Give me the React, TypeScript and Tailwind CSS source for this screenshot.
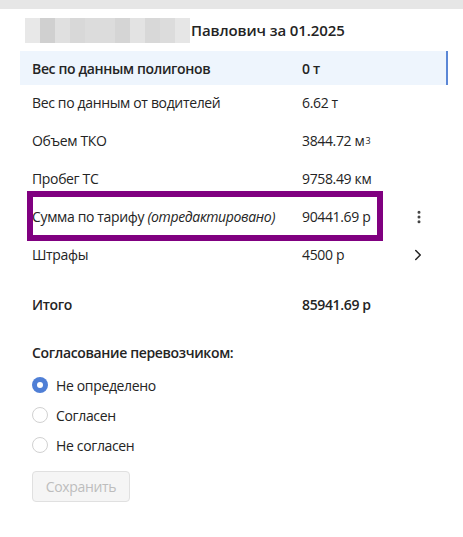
import React from 'react';
import { MoreVertical, ChevronRight } from 'lucide-react';

const blurBlocks = ['#e8e8e8', '#d0d0d0', '#e0e0e0', '#d8d8d8', '#dcdcdc', '#dcdcdc', '#d5d5d5', '#e3e3e3', '#d8d8d8', '#dcdcdc', '#e6e6e6'];

type Row = {
    label: React.ReactNode;
    value: React.ReactNode;
    action?: 'menu' | 'open';
    marked?: boolean;
};

const rows: Row[] = [
    { label: 'Вес по данным от водителей', value: '6.62 т' },
    { label: 'Объем ТКО', value: <>3844.72 м<sup className="text-[9px] relative -top-0.5 ml-px">3</sup></> },
    { label: 'Пробег ТС', value: '9758.49 км' },
    {
        label: <>Сумма по тарифу <i>(отредактировано)</i></>,
        value: '90441.69 р',
        action: 'menu',
        marked: true,
    },
    { label: 'Штрафы', value: '4500 р', action: 'open' },
];

const options = ['Не определено', 'Согласен', 'Не согласен'];

export default function App() {
    return (
        <div className="min-h-screen bg-white text-[14px] tracking-[-0.35px] text-[#242424]" style={{ fontFamily: '"Open Sans", "Noto Sans", sans-serif' }}>
            <div className="h-[9px] bg-[#e6e6e6]" />

            <div className="px-5">
                {/* Header */}
                <div className="flex items-center h-[42px] pl-[5px]">
                    <div className="flex h-[25px]">
                        {blurBlocks.map((c, i) => (
                            <div key={i} className="w-[15px] h-full" style={{ backgroundColor: c }} />
                        ))}
                    </div>
                    <h2 className="text-[15px] font-semibold ml-px tracking-[-0.1px]">Павлович за 01.2025</h2>
                </div>

                {/* Summary table */}
                <div className="w-[428px]">
                    <div className="flex items-center h-[34px] bg-[#eef5fd] border-r-2 border-[#5b87d6] font-semibold">
                        <div className="w-[282px] pl-3">Вес по данным полигонов</div>
                        <div>0 т</div>
                    </div>

                    {rows.map((r, i) => (
                        <div key={i} className="relative flex items-center h-[38px] pb-[3px]">
                            <div className="w-[282px] pl-3">{r.label}</div>
                            <div className="w-[100px]">{r.value}</div>
                            <div className="flex-1 flex justify-end pr-[21px] text-[#424242]">
                                {r.action === 'menu' && <MoreVertical className="w-[16px] h-[16px]" strokeWidth={2.5} />}
                                {r.action === 'open' && <ChevronRight className="w-[18px] h-[18px] text-[#242424]" strokeWidth={2} />}
                            </div>
                            {r.marked && (
                                <div className="absolute left-[7px] top-[-8px] w-[356px] h-[50px] border-[6px] border-[#800080] pointer-events-none" />
                            )}
                        </div>
                    ))}

                    <div className="flex items-center h-[38px] mt-[10px] font-semibold">
                        <div className="w-[282px] pl-3">Итого</div>
                        <div>85941.69 р</div>
                    </div>
                </div>

                {/* Carrier approval */}
                <div className="pl-3 mt-[20px]">
                    <div className="font-semibold leading-[20px]">Согласование перевозчиком:</div>
                    <div className="flex flex-col mt-[12px] gap-[10px]">
                        {options.map((o, i) => (
                            <label key={o} className="flex items-center gap-[8px] h-[20px]">
                                {i === 0 ? (
                                    <span className="w-[16px] h-[16px] rounded-full bg-[#4f7fd6] flex items-center justify-center">
                                        <span className="w-[6px] h-[6px] rounded-full bg-white" />
                                    </span>
                                ) : (
                                    <span className="w-[16px] h-[16px] rounded-full border border-[#d1d1d1] bg-white" />
                                )}
                                <span>{o}</span>
                            </label>
                        ))}
                    </div>
                    <button disabled className="mt-[16px] w-[98px] h-[31px] rounded border border-[#e0e0e0] bg-[#f5f5f5] text-[#bdbdbd]">
                        Сохранить
                    </button>
                </div>
            </div>
        </div>
    );
}
